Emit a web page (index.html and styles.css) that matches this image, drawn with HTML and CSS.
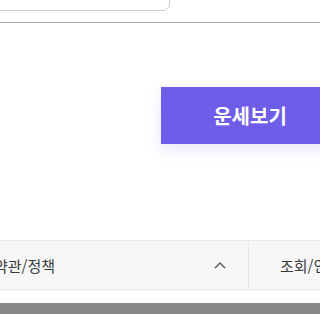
FILE: index.html
```html
<!DOCTYPE html>
<html lang="ko">
<head>
  <meta charset="UTF-8">
  <meta name="viewport" content="width=device-width, initial-scale=1.0">
  <link rel="stylesheet" href="styles.css">
  <title>운세보기</title>
</head>
<body>
  <div class="top">
    <div class="search"></div>
  </div>

  <div class="action">
    <button class="btn-go" type="button">운세보기</button>
  </div>

  <div class="foot-menu">
    <div class="menu-item first">
      <span>약관/정책</span>
      <svg class="caret" width="12" height="8" viewBox="0 0 12 8">
        <polyline points="1,7 6,2 11,7" fill="none" stroke="#555" stroke-width="1.4"/>
      </svg>
    </div>
    <div class="menu-item second">
      <span>조회/인증</span>
    </div>
  </div>

  <div class="bottom-bar"></div>
</body>
</html>
```

FILE: styles.css
```css
*, *:before, *:after {
  margin: 0;
  padding: 0;
  box-sizing: border-box;
}
body {
  background: #ffffff;
  font-family: "Noto Sans CJK KR", "Noto Sans", sans-serif;
  overflow: hidden;
}

.top {
  padding-bottom: 11px;
  border-bottom: 1px solid #aaaaaa;
}
.search {
  margin-top: -29px;
  margin-left: -10px;
  width: 180px;
  height: 40px;
  border: 1px solid #cccccc;
  border-radius: 7px;
}

.action {
  padding: 64px 0 0 161px;
}
.btn-go {
  display: block;
  width: 178px;
  height: 57px;
  border: 0;
  background-color: #6e5de8;
  color: #ffffff;
  font-family: inherit;
  font-size: 20px;
  font-weight: 700;
  box-shadow: 0 6px 14px rgba(110,93,232,0.15);
}

.foot-menu {
  display: flex;
  margin-top: 96px;
  width: 360px;
  height: 50px;
  background: #f7f7f7;
  border-top: 1px solid #e8e8e8;
  border-bottom: 1px solid #e8e8e8;
}
.menu-item {
  display: flex;
  align-items: center;
  font-size: 15px;
  color: #3a3a3a;
}
.menu-item.first {
  margin-left: -26px;
  width: 275px;
  padding: 0 22px 0 20px;
  justify-content: space-between;
  border-right: 1px solid #e8e8e8;
}
.menu-item.second {
  padding-left: 31px;
}

.bottom-bar {
  margin-top: 13px;
  height: 20px;
  background: #888888;
}
```
